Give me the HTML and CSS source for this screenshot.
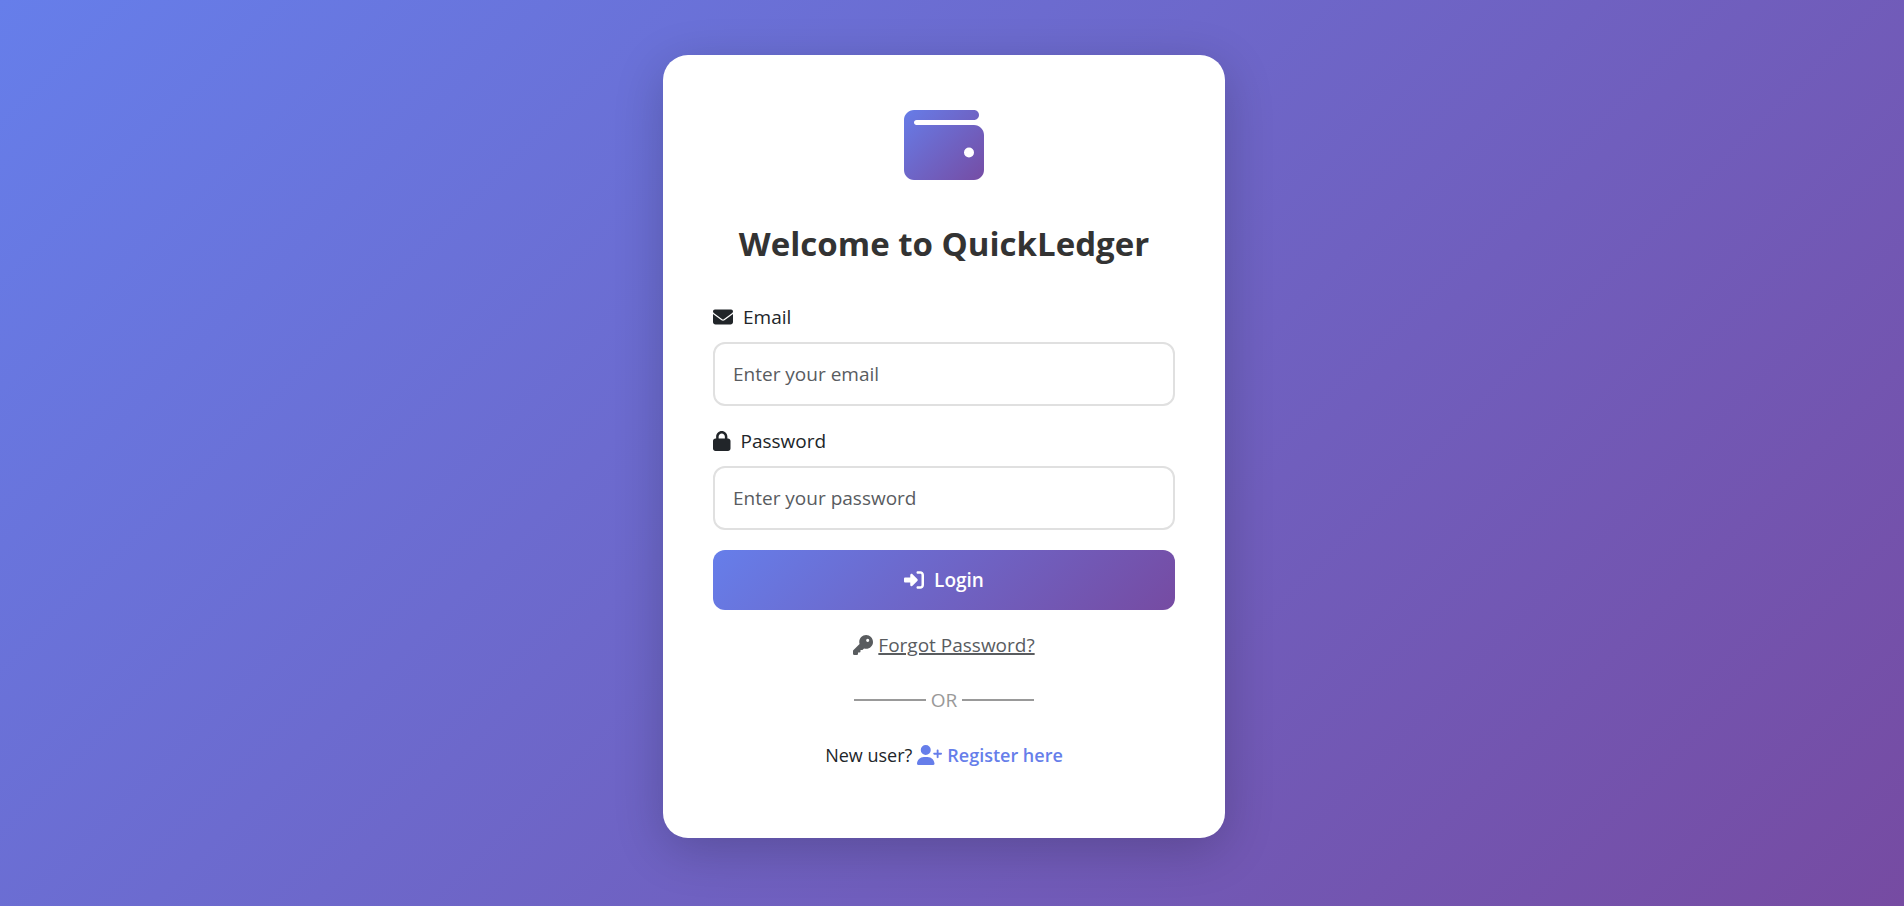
FILE: index.html
```html
<!DOCTYPE html>
<html lang="en">
<head>
<meta charset="utf-8">
<meta name="viewport" content="width=device-width, initial-scale=1">
<title>QuickLedger Login</title>
<link rel="stylesheet" href="styles.css">
</head>
<body>
<main class="card">
  <svg class="logo" viewBox="0 0 512 512" aria-hidden="true">
    <defs>
      <linearGradient id="brand" gradientUnits="userSpaceOnUse" x1="0" y1="0" x2="512" y2="512">
        <stop offset="0" stop-color="#667eea"/>
        <stop offset="1" stop-color="#764ba2"/>
      </linearGradient>
    </defs>
    <path fill="url(#brand)" d="M64 32C28.700 32 0 60.700 0 96V416c0 35.300 28.700 64 64 64H448c35.300 0 64-28.700 64-64V192c0-35.300-28.700-64-64-64H80c-8.800 0-16-7.200-16-16s7.200-16 16-16H448c17.700 0 32-14.300 32-32s-14.300-32-32-32H64zM416 272a32 32 0 1 1 0 64 32 32 0 1 1 0-64z"/>
  </svg>
  <h1 class="title">Welcome to QuickLedger</h1>
  <form class="form">
    <div class="field">
      <label class="label" for="email">
        <svg class="icon" viewBox="0 0 512 512" aria-hidden="true"><path d="M48 64C21.500 64 0 85.500 0 112c0 15.100 7.100 29.300 19.200 38.400L236.800 313.600c11.400 8.500 27 8.500 38.400 0L492.800 150.400c12.100-9.100 19.200-23.300 19.200-38.400c0-26.500-21.500-48-48-48H48zM0 176V384c0 35.300 28.700 64 64 64H448c35.300 0 64-28.700 64-64V176L294.400 339.200c-22.800 17.100-54 17.100-76.800 0L0 176z"/></svg>
        Email
      </label>
      <input class="input" id="email" type="email" placeholder="Enter your email">
    </div>
    <div class="field">
      <label class="label" for="password">
        <svg class="icon" viewBox="0 0 448 512" aria-hidden="true"><path d="M144 144v48H304V144c0-44.200-35.800-80-80-80s-80 35.800-80 80zM80 192V144C80 64.500 144.500 0 224 0s144 64.500 144 144v48h16c35.300 0 64 28.700 64 64V448c0 35.300-28.700 64-64 64H64c-35.300 0-64-28.700-64-64V256c0-35.300 28.700-64 64-64H80z"/></svg>
        Password
      </label>
      <input class="input" id="password" type="password" placeholder="Enter your password">
    </div>
    <button class="button" type="submit">
      <svg class="icon" viewBox="0 0 512 512" aria-hidden="true"><path d="M217.900 105.900L340.700 228.700c7.200 7.200 11.300 17.100 11.300 27.300s-4.100 20.100-11.300 27.300L217.900 406.100c-6.400 6.400-15 9.900-24 9.900c-18.700 0-33.900-15.200-33.900-33.900l0-62.100L32 320c-17.700 0-32-14.300-32-32l0-64c0-17.700 14.300-32 32-32l128 0 0-62.100c0-18.700 15.200-33.900 33.900-33.900c9 0 17.600 3.600 24 9.900zM352 416l64 0c17.700 0 32-14.300 32-32l0-256c0-17.700-14.300-32-32-32l-64 0c-17.700 0-32-14.300-32-32s14.300-32 32-32l64 0c53 0 96 43 96 96l0 256c0 53-43 96-96 96l-64 0c-17.700 0-32-14.300-32-32s14.300-32 32-32z"/></svg>
      Login
    </button>
  </form>
  <div class="links">
    <a class="forgot" href="#forgot">
      <svg class="icon" viewBox="0 0 512 512" aria-hidden="true"><path d="M336 352c97.200 0 176-78.800 176-176S433.200 0 336 0S160 78.800 160 176c0 18.700 2.900 36.800 8.300 53.700L7 391c-4.500 4.500-7 10.600-7 17v80c0 13.300 10.700 24 24 24h80c13.300 0 24-10.700 24-24V448h40c13.300 0 24-10.700 24-24V384h40c6.400 0 12.500-2.500 17-7l33.300-33.300c16.900 5.400 35 8.300 53.700 8.300zM376 96a40 40 0 1 1 0 80 40 40 0 1 1 0-80z"/></svg>
      <span class="underlined">Forgot Password?</span>
    </a>
    <div class="divider">OR</div>
    <p class="signup">
      <span>New user?</span>
      <a class="register" href="#register">
        <svg class="icon" viewBox="0 0 640 512" aria-hidden="true"><path d="M96 128a128 128 0 1 1 256 0A128 128 0 1 1 96 128zM0 482.300C0 383.800 79.800 304 178.300 304h91.400C368.200 304 448 383.800 448 482.300c0 16.400-13.300 29.700-29.700 29.700H29.700C13.300 512 0 498.700 0 482.300zM504 312V248H440c-13.300 0-24-10.700-24-24s10.700-24 24-24h64V136c0-13.300 10.700-24 24-24s24 10.700 24 24v64h64c13.300 0 24 10.700 24 24s-10.700 24-24 24H552v64c0 13.300-10.700 24-24 24s-24-10.700-24-24z"/></svg>
        Register here
      </a>
    </p>
  </div>
</main>
</body>
</html>
```

FILE: styles.css
```css
* {
  box-sizing: border-box;
}

body {
  margin: 0;
  min-height: 100vh;
  padding: 42px 32px 55px 16px;
  display: flex;
  align-items: center;
  justify-content: center;
  background: linear-gradient(135deg, #667eea 0%, #764ba2 100%);
  color: #212529;
  font-family: "Open Sans", "Noto Sans", sans-serif;
  font-size: 19px;
  line-height: 30px;
}

.card {
  display: flex;
  flex-direction: column;
  align-items: center;
  width: 100%;
  max-width: 562px;
  padding: 50px 50px 68px;
  border-radius: 25px;
  background: #fff;
  box-shadow: 0 12px 50px rgba(0, 0, 0, 0.2);
}

.logo {
  width: 80px;
  height: 80px;
}

.title {
  margin: 37px 0 36px;
  color: #333;
  font-size: 33px;
  font-weight: 700;
  line-height: 44px;
  text-align: center;
}

.form {
  display: flex;
  flex-direction: column;
  gap: 20px;
  width: 100%;
}

.field {
  display: flex;
  flex-direction: column;
  gap: 10px;
}

.label {
  display: flex;
  align-items: center;
  gap: 10px;
}

.icon {
  height: 20px;
  fill: currentColor;
}

.input {
  width: 100%;
  height: 64px;
  padding: 0 18px;
  border: 2px solid #e0e0e0;
  border-radius: 12px;
  background: #fff;
  color: inherit;
  font: inherit;
}

.input::placeholder {
  color: #595c5f;
  opacity: 1;
}

.button {
  display: flex;
  align-items: center;
  justify-content: center;
  gap: 10px;
  height: 60px;
  border: 0;
  border-radius: 12px;
  background: linear-gradient(135deg, #667eea 0%, #764ba2 100%);
  color: #fff;
  font: inherit;
  font-weight: 600;
}

.links {
  display: flex;
  flex-direction: column;
  align-items: center;
  gap: 25px;
  margin-top: 20px;
}

.forgot {
  display: flex;
  align-items: center;
  gap: 5px;
  color: #595c5f;
  text-decoration: none;
}

.underlined {
  text-decoration: underline;
  text-decoration-thickness: 2px;
}

.divider {
  display: flex;
  align-items: center;
  gap: 5px;
  color: #999;
}

.divider::before,
.divider::after {
  content: "";
  width: 72px;
  height: 2px;
  background: #999;
}

.signup {
  display: flex;
  align-items: center;
  gap: 5px;
  margin: 0;
  font-size: 18px;
}

.register {
  display: flex;
  align-items: center;
  gap: 5px;
  color: #667eea;
  font-weight: 600;
  text-decoration: none;
}
```
